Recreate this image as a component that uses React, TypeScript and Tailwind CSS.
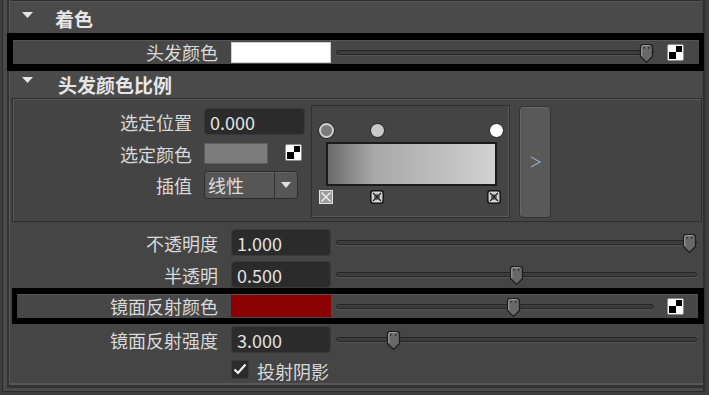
import React from "react";

const LABEL = "text-[18px] leading-none text-[#d9d9d9] text-right whitespace-nowrap";

function Triangle() {
  return (
    <svg width="11" height="6" viewBox="0 0 11 6">
      <path d="M0 0H11L5.5 6Z" fill="#e4e4e4" />
    </svg>
  );
}

function Checker() {
  return (
    <div className="w-[17px] h-[17px] border border-[#8f8f8f] rounded-[2px] bg-white p-[1px]">
      <div className="w-full h-full grid grid-cols-2 grid-rows-2">
        <div className="bg-white" />
        <div className="bg-black" />
        <div className="bg-black" />
        <div className="bg-white" />
      </div>
    </div>
  );
}

function Thumb() {
  return (
    <svg width="15" height="21" viewBox="0 0 15 21">
      <path
        d="M1.5 4Q1.5 1.5 4 1.5H11Q13.5 1.5 13.5 4V13.5L7.5 19.5L1.5 13.5Z"
        fill="#686868"
        stroke="#1b1b1b"
        strokeWidth="1.2"
      />
      <path d="M2.8 13V4.2Q2.8 2.7 4.3 2.7H10.8" fill="none" stroke="#a6a6a6" strokeWidth="1" />
      <path d="M4.6 6V4.3H5.8M9.6 6V4.3H10.8" fill="none" stroke="#2a2a2a" strokeWidth="0.9" />
    </svg>
  );
}

function Slider({ value }: { value: number }) {
  return (
    <div className="relative flex-1 h-[21px] flex items-center">
      <div className="w-full h-[5px] rounded-full border border-[#262626] bg-[#3c3c3c] shadow-[0_1px_0_#535353]" />
      <div className="absolute top-[1px]" style={{ left: `calc((100% - 15px) * ${value})` }}>
        <Thumb />
      </div>
    </div>
  );
}

function NumInput({ value, w }: { value: string; w: string }) {
  return (
    <div
      className={`${w} h-[27px] rounded-[4px] bg-[#2b2b2b] border border-[#393939] flex items-center pl-[5px] text-[18px] leading-none text-[#e2e2e2]`}
    >
      {value}
    </div>
  );
}

function Row({ label, value, slider }: { label: string; value: string; slider: number }) {
  return (
    <div className="flex items-center h-full">
      <div className={`w-[208px] ${LABEL}`}>{label}</div>
      <div className="ml-[13px]">
        <NumInput value={value} w="w-[100px]" />
      </div>
      <div className="ml-[5px] mr-[6px] flex-1 flex">
        <Slider value={slider} />
      </div>
    </div>
  );
}

function StopCircle({ pos, kind }: { pos: number; kind: "sel" | "mid" | "end" }) {
  const cls =
    kind === "sel"
      ? "bg-[#7a7a7a] border-2 border-[#cfcfcf] shadow-[0_0_0_1px_#2a2a2a]"
      : kind === "mid"
      ? "bg-[#c9c9c9] border-[1.5px] border-[#1c1c1c]"
      : "bg-white border-[1.5px] border-[#1c1c1c]";
  return (
    <div
      className={`absolute top-[17px] w-[15px] h-[15px] rounded-full ${cls}`}
      style={{ left: `${14 + pos * 170 - 7.5}px` }}
    />
  );
}

function StopBox({ pos, sel }: { pos: number; sel: boolean }) {
  return (
    <div className="absolute top-[84px]" style={{ left: `${14 + pos * 170 - 7}px` }}>
      {sel ? (
        <svg width="14" height="14" viewBox="0 0 14 14">
          <rect x="0.5" y="0.5" width="13" height="13" fill="#9c9c9c" stroke="#e2e2e2" />
          <path d="M2.5 2.5L11.5 11.5M11.5 2.5L2.5 11.5" stroke="#f2f2f2" strokeWidth="1.3" />
        </svg>
      ) : (
        <svg width="14" height="14" viewBox="0 0 14 14">
          <rect x="0.8" y="0.8" width="12.4" height="12.4" rx="2.5" fill="#d2d2d2" stroke="#161616" strokeWidth="1.5" />
          <path d="M3 3L11 11M11 3L3 11" stroke="#1e1e1e" strokeWidth="1.3" />
          <circle cx="7" cy="7" r="2.2" fill="none" stroke="#1e1e1e" strokeWidth="1" />
        </svg>
      )}
    </div>
  );
}

export default function App() {
  return (
    <div className="w-[709px] h-[395px] bg-[#3e3e3e] overflow-hidden font-['Noto_Sans_CJK_SC','Noto_Sans',sans-serif]">
      {/* outer frame */}
      <div className="ml-[2px] w-[703px] h-[392px] bg-[#4a4a4a] border-l border-l-[#2b2b2b] border-r-2 border-r-[#2e2e2e] border-b border-b-[#2b2b2b] pl-[4px] pb-[3px]">
        {/* inner frame */}
        <div className="w-[696px] h-[388px] border-l-2 border-b-[3px] border-[#333333]">
          {/* content */}
          <div className="h-[385px] border-l border-b-2 border-[#585858] bg-[#454545] flex flex-col">
            {/* Header 1 */}
            <div className="h-[33px] shrink-0 bg-[#4a4a4a] border-t border-[#2e2e2e] shadow-[inset_0_1px_0_#565656] flex items-start mr-[1px]">
              <div className="ml-[12px] mt-[11px]">
                <Triangle />
              </div>
              <div className="ml-[22px] mt-[8px] text-[19px] leading-none font-bold text-[#e6e6e6]">着色</div>
            </div>

            {/* Highlight row 1 */}
            <div className="h-[38px] shrink-0 -ml-[3px] -mr-[1px] border-black border-y-[7px] border-l-[6px] border-r-[5px]">
              <div className="h-full bg-[#474747] shadow-[inset_0_1px_0_#565656] flex items-center">
                <div className={`w-[205px] ${LABEL}`}>头发颜色</div>
                <div className="ml-[13px] w-[100px] h-[21px] bg-white border border-[#d0d0d0]" />
                <div className="ml-[5px] flex-1 flex">
                  <Slider value={1} />
                </div>
                <div className="ml-[13px] mr-[15px]">
                  <Checker />
                </div>
              </div>
            </div>

            {/* Header 2 */}
            <div className="h-[27px] shrink-0 bg-[#4a4a4a] flex items-start mr-[1px]">
              <div className="ml-[12px] mt-[6px]">
                <Triangle />
              </div>
              <div className="ml-[25px] mt-[4px] text-[19px] leading-none font-bold text-[#e6e6e6]">头发颜色比例</div>
            </div>

            {/* Sub panel */}
            <div className="h-[124px] shrink-0 ml-[2px] mr-[1px] border border-[#2e2e2e] shadow-[inset_1px_1px_0_#595959] bg-[#444444] flex items-start">
              <div className="w-[292px] pt-[9px] flex flex-col">
                <div className="h-[27px] flex items-center">
                  <div className={`w-[179px] ${LABEL}`}>选定位置</div>
                  <div className="ml-[12px]">
                    <NumInput value="0.000" w="w-[101px]" />
                  </div>
                </div>
                <div className="mt-[5px] h-[27px] flex items-center">
                  <div className={`w-[179px] ${LABEL}`}>选定颜色</div>
                  <div className="ml-[12px] w-[64px] h-[21px] bg-[#7b7b7b] border border-[#5e5e5e]" />
                  <div className="ml-[17px] -mt-[3px]">
                    <Checker />
                  </div>
                </div>
                <div className="mt-[4px] h-[28px] flex items-center">
                  <div className={`w-[179px] ${LABEL}`}>插值</div>
                  <div className="ml-[12px] w-[94px] h-[28px] rounded-[4px] border border-[#2c2c2c] bg-[#565656] shadow-[inset_0_1px_0_#666666] flex items-center">
                    <div className="flex-1 pl-[3px] text-[18px] leading-none text-[#dddddd]">线性</div>
                    <div className="w-[23px] h-full border-l border-[#333333] flex items-center justify-center">
                      <svg width="10" height="6" viewBox="0 0 10 6">
                        <path d="M0 0H10L5 6Z" fill="#e0e0e0" />
                      </svg>
                    </div>
                  </div>
                </div>
              </div>

              {/* gradient box */}
              <div className="relative ml-[6px] mt-[6px] w-[199px] h-[113px] border border-[#303030] shadow-[inset_-1px_-1px_0_#585858] pl-[14px] pt-[36px]">
                <div className="w-[171px] h-[44px] border-2 border-[#1c1c1c] bg-[linear-gradient(to_right,#6a6a6a,#a8a8a8_27%,#bdbdbd_65%,#d2d2d2)]" />
                <StopCircle pos={0} kind="sel" />
                <StopCircle pos={0.3} kind="mid" />
                <StopCircle pos={1} kind="end" />
                <StopBox pos={0} sel={true} />
                <StopBox pos={0.3} sel={false} />
                <StopBox pos={0.99} sel={false} />
              </div>

              {/* > button */}
              <div className="ml-[9px] mt-[7px] w-[32px] h-[112px] rounded-[4px] border border-[#333333] bg-[#595959] shadow-[inset_1px_1px_0_#686868] flex items-center justify-center">
                <svg width="11" height="12" viewBox="0 0 11 12">
                  <path d="M1 1L10 6L1 11" fill="none" stroke="#8fa5bc" strokeWidth="1.3" />
                </svg>
              </div>
            </div>

            <div className="h-[5px] shrink-0" />

            <div className="h-[31px] shrink-0">
              <Row label="不透明度" value="1.000" slider={1} />
            </div>
            <div className="h-[30px] shrink-0 pt-[3px]">
              <Row label="半透明" value="0.500" slider={0.5} />
            </div>

            {/* Highlight row 2 */}
            <div className="h-[36px] shrink-0 ml-[2px] -mr-[1px] border-black border-y-[6px] border-l-[5px] border-r-[6px]">
              <div className="h-full bg-[#474747] shadow-[inset_0_1px_0_#565656] flex items-center">
                <div className={`w-[201px] ${LABEL}`}>镜面反射颜色</div>
                <div className="ml-[13px] w-[100px] h-[22px] bg-[#8b0000]" />
                <div className="ml-[5px] flex-1 flex">
                  <Slider value={0.56} />
                </div>
                <div className="ml-[13px] mr-[14px]">
                  <Checker />
                </div>
              </div>
            </div>

            <div className="h-[31px] shrink-0">
              <Row label="镜面反射强度" value="3.000" slider={0.145} />
            </div>

            <div className="h-[28px] shrink-0 flex items-center">
              <div className="w-[208px]" />
              <div className="ml-[13px] w-[18px] h-[19px] rounded-[2px] bg-[#2b2b2b] border border-[#3a3a3a] flex items-center justify-center">
                <svg width="14" height="12" viewBox="0 0 14 12">
                  <path d="M1.5 6.5L5 10L12.5 1.5" fill="none" stroke="#f2f2f2" strokeWidth="2.2" />
                </svg>
              </div>
              <div className="ml-[8px] mt-[3px] text-[18px] leading-none text-[#d9d9d9]">投射阴影</div>
            </div>
          </div>
        </div>
      </div>
    </div>
  );
}
